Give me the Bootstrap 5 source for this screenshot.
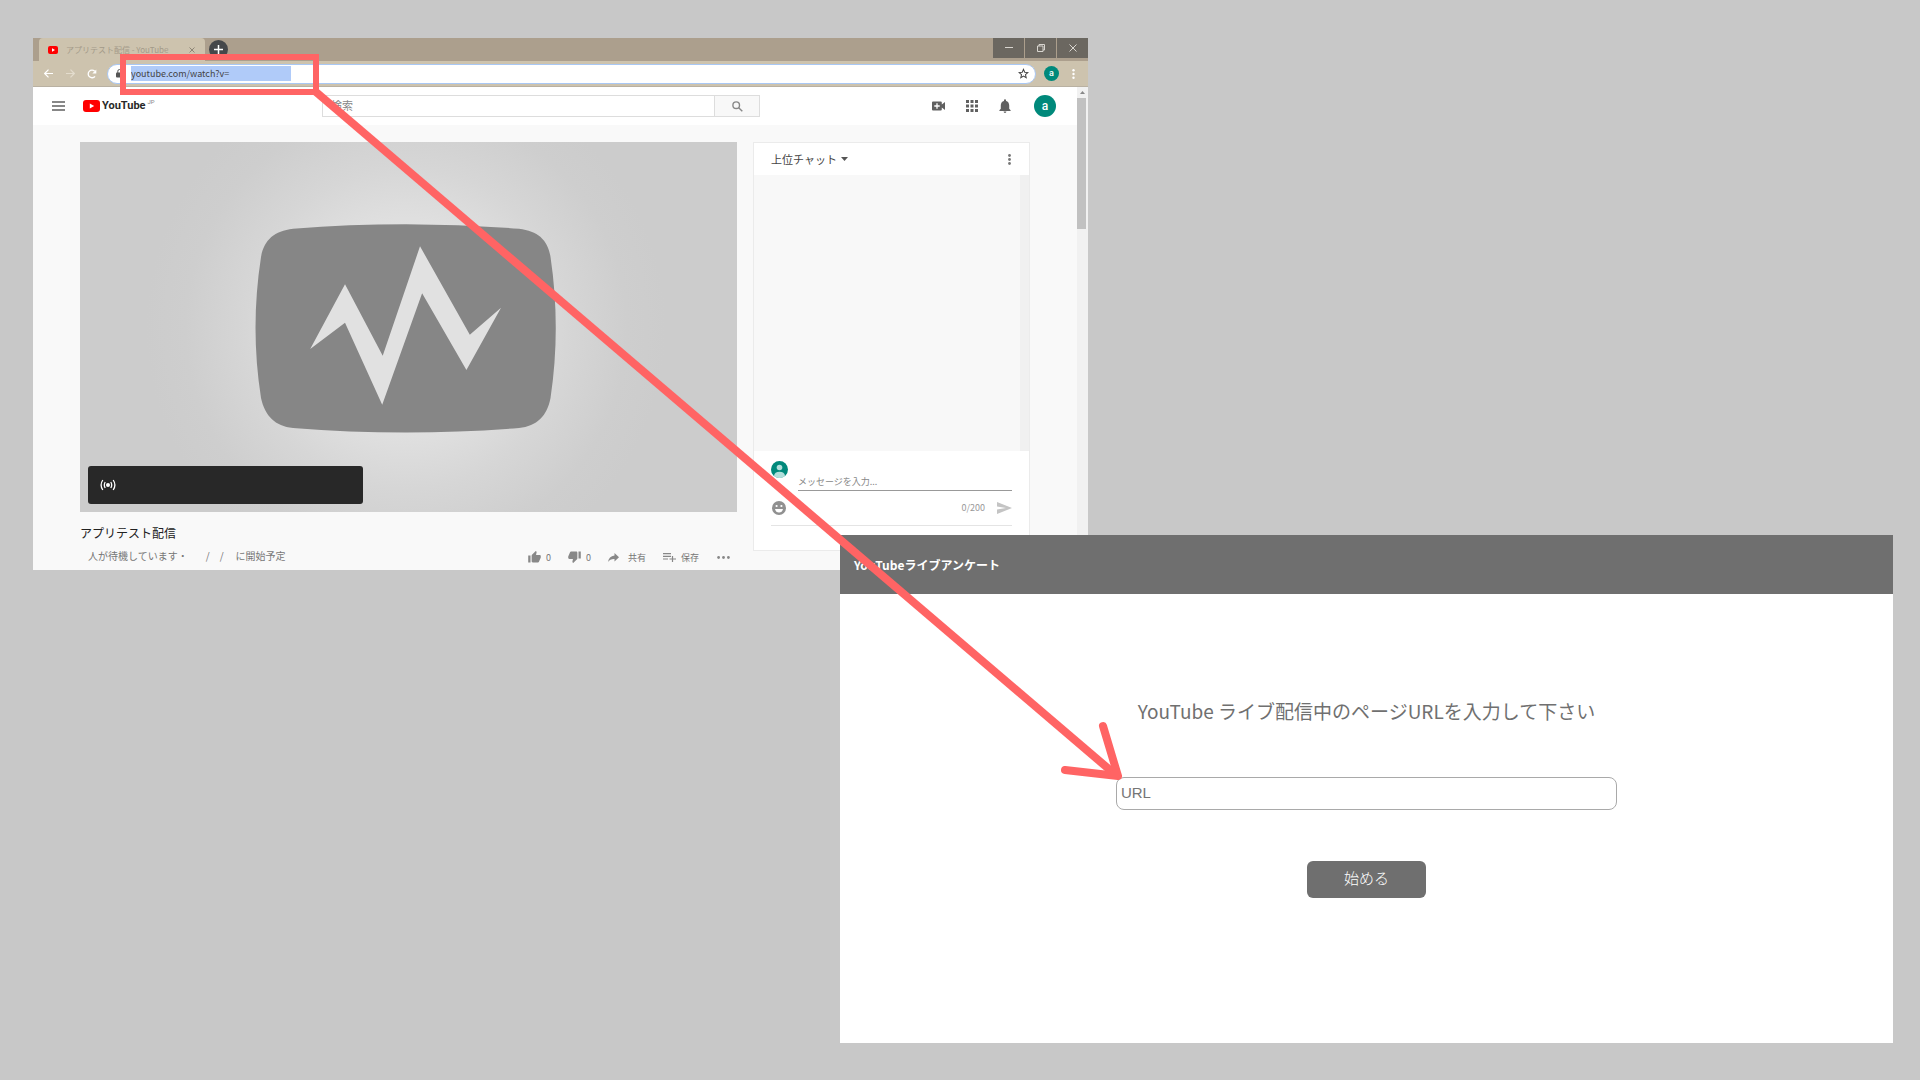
<!DOCTYPE html>
<html lang="ja">
<head>
<meta charset="utf-8">
<meta name="viewport" content="width=device-width, initial-scale=1">
<title>YouTubeライブアンケート</title>
<link href="https://cdn.jsdelivr.net/npm/bootstrap@5.3.0/dist/css/bootstrap.min.css" rel="stylesheet">
<style>
body{background:#c8c8c8;font-family:"Noto Sans CJK JP","Noto Sans",sans-serif;line-height:1.4}
.stage{aspect-ratio:16/9;overflow:hidden}
.win{position:absolute}
.win-browser{left:1.72%;top:3.52%;width:54.95%;background:#f9f9f9}
.win-survey{left:43.75%;top:49.54%;width:54.84%;height:47.04%;background:#fff}
.overlay{position:absolute;inset:0;width:100%;height:100%;pointer-events:none}
.ib{background:none;border:0;padding:0;display:inline-flex;align-items:center;justify-content:center;line-height:1;color:inherit}
svg{display:block;flex:none}
/* browser frame */
.tabbar{background:#ac9f8d;height:23px;padding-left:6px}
.tab-item{background:#cdc3ae;width:166px;height:23px;border-radius:4px 4px 0 0;padding:0 10px 0 9px;color:#a39a89;font-size:8px}
.tab-new{width:19px;height:19px;border-radius:50%;background:#45474a;color:#fff;margin:2px 0 0 4px}
.wc{background:#6b6760;width:31px;height:20px;color:#d8d5cf}
.toolbar{background:#cdc3ae;height:26px;border-bottom:1px solid #b9b1a2;color:#fff}
.toolbar .nav-ic{width:22px}
.omni{height:20px;background:#fff;border:1px solid #a9c8f5;border-radius:10px;padding:0 6px 0 8px;color:#555}
.omni input{width:160px;height:15px;border:0;padding:0;background:#b0cbf9;color:#444;font-size:9px;outline:0}
.ava{background:#00897b;color:#fff;border-radius:50%;font-family:Roboto,sans-serif;font-weight:500}
.ava-s{width:15px;height:15px;font-size:9px}
.ava-m{width:22px;height:22px;font-size:12px}
/* site header */
.top{background:#fff;height:38px;padding:0 21px 0 19px;color:#606060}
.brand{width:239px;padding-left:18px;box-sizing:content-box;width:239px;color:#282828;font:700 11px/14px Roboto,sans-serif;text-decoration:none}
.brand sup{font:400 6px/6px Roboto,sans-serif;color:#888;top:-4px;margin-left:2px}
.seek{width:438px;height:22px}
.seek input{border:1px solid #ddd;padding:0 8px;font-size:11px;color:#888;min-width:0}
.seek input::placeholder,.msg::placeholder{color:#888;opacity:1}
.seek button{width:45px;border:1px solid #ddd;border-left:0;background:#f8f8f8;color:#888}
.vscroll{width:11px;background:#f1f1f1}
.vscroll .cap-up{height:11px}
.vscroll .thumb{height:131px;width:9px;background:#c1c1c1}
.watch{padding:17px 47px 6px 47px;gap:16px}
.video{aspect-ratio:657/370}
.live{position:absolute;left:8px;bottom:8px;width:275px;height:38px;border-radius:3px;background:#282828;padding-left:12px}
.v-title{font-size:12px;font-weight:400;line-height:18px;margin:12px 0 0;color:#222}
.v-meta{font-size:10px;line-height:16px;color:#777;padding-left:8px;margin-top:6px}
.v-acts{font-size:9px;color:#777;padding-right:7px}
.v-acts .ib{gap:5px}
.chat{width:277px;border:1px solid #ebebeb;background:#fff;height:409px}
.chat-h{height:32px;padding:0 17px 0 17px;font-size:11px;color:#444}
.chat-b{height:276px;background:#f8f8f8}
.chat-b div{width:9px;background:#f0f0f0}
.chat-f{padding:10px 17px 0 17px}
.msg{border:0;border-bottom:1px solid #999;padding:0;font-size:9px;height:19px;width:214px;background:none;outline:0;margin-top:11px}
.chat-l{color:#999;font-size:9px;height:35px;padding-left:1px;border-bottom:1px solid #e4e4e4}
/* survey */
.s-head{background:#6f6f6f;height:59px;padding:1px 0 0 14px;color:#fff;font-size:12px;font-weight:700}
.s-lead{font-size:19px;line-height:26px;color:#707070;margin:104px 0 53px}
.s-url{width:501px;height:33px;border:1px solid #a9a9a9;border-radius:8px;padding:0 4px 2px;font:15px "Liberation Sans",sans-serif}
.s-url::placeholder{color:#757575;opacity:1}
.s-go{width:119px;height:37px;border:0;border-radius:6px;background:#6f6f6f;color:#fff;font-size:15px;font-weight:300;line-height:22px;padding:0 0 3px;margin-top:51px}
</style>
</head>
<body>
<main class="stage position-relative w-100">
<section class="win win-browser">
  <div class="tabbar d-flex">
    <div class="tab-item d-flex align-items-center">
      <svg width="10" height="8" viewBox="0 0 10 8"><rect width="10" height="8" rx="2" fill="#f00"/><path d="M4 2.200 7 4 4 5.800z" fill="#fff"/></svg>
      <span class="ps-1 ms-1 flex-grow-1 text-nowrap">アプリテスト配信 - YouTube</span>
      <button class="ib" aria-label="タブを閉じる"><svg width="6" height="6" viewBox="0 0 6 6" stroke="#8d8576"><path d="M.5.5l5 5M5.500.5l-5 5"/></svg></button>
    </div>
    <button class="ib tab-new" aria-label="新しいタブ"><svg width="9" height="9" viewBox="0 0 9 9" stroke="#fff" stroke-width="1.500"><path d="M4.500 0v9M0 4.500h9"/></svg></button>
    <div class="d-flex ms-auto" style="gap:1px">
      <button class="ib wc" aria-label="最小化"><svg width="8" height="8" viewBox="0 0 8 8" stroke="currentColor"><path d="M0 3.500h8"/></svg></button>
      <button class="ib wc" aria-label="元に戻す"><svg width="8" height="8" viewBox="0 0 8 8" stroke="currentColor" fill="none"><path d="M.5 2h5.500v5.500H.5zM2 2V.5h5.500V6H6"/></svg></button>
      <button class="ib wc" aria-label="閉じる"><svg width="8" height="8" viewBox="0 0 8 8" stroke="currentColor"><path d="M.5.5l7 7M7.500.5l-7 7"/></svg></button>
    </div>
  </div>
  <div class="toolbar d-flex align-items-center">
    <div class="d-flex ps-1">
      <button class="ib nav-ic" aria-label="戻る"><svg width="9" height="9" viewBox="0 0 9 9" fill="none" stroke="#fff" stroke-width="1.200"><path d="M9 4.500H1M4.500.7.7 4.500l3.800 3.800"/></svg></button>
      <button class="ib nav-ic" aria-label="進む"><svg width="9" height="9" viewBox="0 0 9 9" fill="none" stroke="#e3dccd" stroke-width="1.200"><path d="M0 4.500h8M4.500.7l3.800 3.800-3.800 3.800"/></svg></button>
      <button class="ib nav-ic" aria-label="再読み込み"><svg width="10" height="10" viewBox="0 0 10 10"><path d="M8 7.300A3.800 3.800 0 1 1 7.700 2.300" fill="none" stroke="#fff" stroke-width="1.300"/><path d="M9.300.5v4H5.300z" fill="#fff"/></svg></button>
    </div>
    <div class="omni d-flex align-items-center flex-grow-1 ms-1">
      <svg width="7" height="9" viewBox="0 0 7 9"><rect y="3.500" width="7" height="5" rx="1" fill="#555"/><path d="M1.800 4V2.200a1.700 1.700 0 0 1 3.400 0V4" fill="none" stroke="#555"/></svg>
      <input class="ms-2" type="text" value="youtube.com/watch?v=" aria-label="アドレス">
      <button class="ib ms-auto" aria-label="ブックマーク"><svg width="11" height="11" viewBox="0 0 24 24"><path d="M12 3l2.700 6.300 6.800.6-5.200 4.500 1.600 6.700L12 17.500l-5.900 3.600 1.600-6.700L2.500 9.900l6.800-.6z" fill="none" stroke="#444" stroke-width="2.200"/></svg></button>
    </div>
    <button class="ib ava ava-s ms-2" aria-label="プロフィール">a</button>
    <button class="ib ms-2 me-2 px-1" aria-label="メニュー"><svg width="5" height="10" viewBox="0 0 5 10" fill="#fff"><circle cx="2.500" cy="1.200" r="1.200"/><circle cx="2.500" cy="5" r="1.200"/><circle cx="2.500" cy="8.800" r="1.200"/></svg></button>
  </div>
  <div class="d-flex">
    <div class="flex-grow-1">
      <header class="top d-flex align-items-center">
        <button class="ib" aria-label="ガイド"><svg width="13" height="10" viewBox="0 0 13 10" stroke="#606060" stroke-width="1.300"><path d="M0 1h13M0 5h13M0 9h13"/></svg></button>
        <a class="brand d-flex align-items-center" href="#"><svg width="17" height="12" viewBox="0 0 17 12"><rect width="17" height="12" rx="3" fill="#f00"/><path d="M6.800 3.400 11.200 6 6.800 8.600z" fill="#fff"/></svg><span style="margin-left:2px">YouTube</span><sup>JP</sup></a>
        <form class="seek d-flex"><input class="flex-grow-1" type="search" placeholder="検索" aria-label="検索"><button class="ib" type="button" aria-label="検索する"><svg width="11" height="11" viewBox="0 0 11 11" fill="none" stroke="#888" stroke-width="1.400"><circle cx="4.200" cy="4.200" r="3.300"/><path d="M6.700 6.700l3.600 3.600"/></svg></button></form>
        <div class="d-flex align-items-center ms-auto">
          <button class="ib" aria-label="作成"><svg width="13" height="10" viewBox="0 0 13 10"><path d="M1 .5h7.800q1 0 1 1v2L13 1v8L9.800 6.500v2q0 1-1 1H1q-1 0-1-1v-7q0-1 1-1z" fill="#606060"/><path d="M5 2.300v5.400M2.300 5h5.400" stroke="#fff" stroke-width="1.300"/></svg></button>
          <button class="ib" style="margin-left:21px" aria-label="アプリ"><svg width="12" height="12" viewBox="0 0 12 12" fill="#606060"><path d="M0 0h3v3H0zM4.500 0h3v3h-3zM9 0h3v3H9zM0 4.500h3v3H0zM4.500 4.500h3v3h-3zM9 4.500h3v3H9zM0 9h3v3H0zM4.500 9h3v3h-3zM9 9h3v3H9z"/></svg></button>
          <button class="ib" style="margin-left:21px" aria-label="通知"><svg width="12" height="14" viewBox="0 0 16 20" fill="#606060"><path d="M8 20a2 2 0 0 0 2-2H6a2 2 0 0 0 2 2zM14 14V9c0-3.100-1.600-5.600-4.500-6.300V2a1.500 1.500 0 0 0-3 0v.7C3.600 3.400 2 5.900 2 9v5l-2 2v1h16v-1z"/></svg></button>
          <button class="ib ava ava-m" style="margin-left:23px" aria-label="アカウント">a</button>
        </div>
      </header>
      <div class="watch d-flex align-items-start">
        <article class="flex-grow-1">
          <div class="video position-relative">
            <svg class="w-100 h-100" viewBox="80 142 657 370">
              <defs><radialGradient id="glow" gradientUnits="userSpaceOnUse" cx="406" cy="328" r="260"><stop offset="0" stop-color="#eee"/><stop offset=".4" stop-color="#e0e0e0"/><stop offset=".62" stop-color="#d6d6d6"/><stop offset=".85" stop-color="#cecece"/><stop offset="1" stop-color="#ccc"/></radialGradient></defs>
              <path fill="url(#glow)" d="M80 142h657v370H80z"/>
              <path fill="#868686" d="M293 228.700Q406 220 519 228.700C538 231 548 240 550.500 257Q561 328 550.500 398C547 416 537 426 519 428Q406 437 293 428C275 426 265 416 261 398Q250 328 261 257C264 240 274 231 293 228.700z"/>
              <path fill="#e1e1e1" d="M310.200 349 345 284.300 382.700 355.700 420 246.300 469.800 334.700 501 307.700 466.400 370 422.100 293.300 382.200 404.700 345 322.700z"/>
            </svg>
            <div class="live d-flex align-items-center"><svg width="16" height="12" viewBox="0 0 16 12" fill="none" stroke="#fff" stroke-width="1.300"><circle cx="8" cy="6" r="2" fill="#fff" stroke="none"/><path d="M5.200 3q-1.800 3 0 6M10.800 3q1.800 3 0 6M2.800 1Q-.6 6 2.800 11M13.200 1q3.400 5 0 10"/></svg></div>
          </div>
          <h1 class="v-title">アプリテスト配信</h1>
          <div class="d-flex justify-content-between">
            <div class="v-meta d-flex text-nowrap"><span>人が待機しています・</span><span style="margin-left:18px">/</span><span style="margin-left:10px">/</span><span style="margin-left:12px">に開始予定</span></div>
            <div class="v-acts d-flex align-items-center pt-2 text-nowrap">
              <button class="ib"><svg width="13" height="12" viewBox="1 1 22 21" fill="#888"><path d="M1 21h4V9H1v12zm22-11c0-1.100-.9-2-2-2h-6.300l1-4.600v-.3c0-.4-.2-.8-.4-1.100L14.200 1 7.600 7.600C7.200 8 7 8.500 7 9v10c0 1.100.9 2 2 2h9c.8 0 1.500-.5 1.800-1.200l3-7.100c.1-.2.200-.5.200-.7z"/></svg>0</button>
              <button class="ib" style="margin-left:17px"><svg width="13" height="12" viewBox="1 2 22 21" fill="#888"><path d="M15 3H6c-.8 0-1.500.5-1.800 1.200l-3 7.100c-.1.200-.2.500-.2.700v2c0 1.100.9 2 2 2h6.300l-1 4.600v.3c0 .4.200.8.4 1.100L9.800 23l6.600-6.600c.4-.4.600-.9.600-1.400V5c0-1.100-.9-2-2-2zm4 0v12h4V3z"/></svg>0</button>
              <button class="ib" style="margin-left:17px;gap:9px"><svg width="11" height="9" viewBox="0 0 11 9" fill="#888"><path d="M6.500 0 11 4.200 6.500 8.500V6Q2 5.800 0 9 .8 3.300 6.500 2.500z"/></svg>共有</button>
              <button class="ib" style="margin-left:17px"><svg width="13" height="10" viewBox="0 0 13 10" fill="none" stroke="#888" stroke-width="1.200"><path d="M0 1.600h8M0 4.300h8M0 7h5M9.500 4v6M6.500 7H13"/></svg>保存</button>
              <button class="ib" style="margin-left:18px" aria-label="その他"><svg width="13" height="4" viewBox="0 0 13 4" fill="#888"><circle cx="1.600" cy="2.500" r="1.400"/><circle cx="6.500" cy="2.500" r="1.400"/><circle cx="11.400" cy="2.500" r="1.400"/></svg></button>
            </div>
          </div>
        </article>
        <aside class="chat flex-shrink-0">
          <div class="chat-h d-flex align-items-center justify-content-between">
            <button class="ib"><span>上位チャット</span><svg class="ms-1" width="7" height="4" viewBox="0 0 7 4"><path d="M0 0h7L3.500 4z" fill="#555"/></svg></button>
            <button class="ib" aria-label="チャットのメニュー"><svg width="5" height="11" viewBox="0 0 5 11" fill="#777"><circle cx="2.500" cy="1.500" r="1.400"/><circle cx="2.500" cy="5.500" r="1.400"/><circle cx="2.500" cy="9.500" r="1.400"/></svg></button>
          </div>
          <div class="chat-b d-flex justify-content-end"><div></div></div>
          <div class="chat-f">
            <div class="d-flex align-items-start justify-content-between">
              <svg width="17" height="17" viewBox="0 0 17 17"><circle cx="8.500" cy="8.500" r="8.500" fill="#00897b"/><circle cx="8.500" cy="6.500" r="2.800" fill="#b2dfdb"/><path d="M3 15Q3.500 10.800 8.500 10.800T14 15a8.500 8.500 0 0 1-11 0z" fill="#b2dfdb"/></svg>
              <input class="msg" type="text" placeholder="メッセージを入力..." aria-label="メッセージを入力">
            </div>
            <div class="chat-l d-flex align-items-center">
              <button class="ib" aria-label="絵文字"><svg width="14" height="14" viewBox="0 0 14 14"><circle cx="7" cy="7" r="7" fill="#909090"/><path d="M3 8h8q-.8 3.600-4 3.600T3 8z" fill="#fff"/><circle cx="4.600" cy="5" r="1.100" fill="#fff"/><circle cx="9.400" cy="5" r="1.100" fill="#fff"/></svg></button>
              <span class="ms-auto">0/200</span>
              <button class="ib" style="margin-left:12px" aria-label="送信"><svg width="15" height="12" viewBox="0 0 15 12"><path d="M0 0l15 6-15 6V7.500L9 6 0 4.500z" fill="#c4c4c4"/></svg></button>
            </div>
          </div>
        </aside>
      </div>
    </div>
    <div class="vscroll flex-shrink-0">
      <div class="cap-up d-flex align-items-center justify-content-center"><svg width="5" height="3" viewBox="0 0 5 3"><path d="M0 3h5L2.500 0z" fill="#888"/></svg></div>
      <div class="thumb"></div>
    </div>
  </div>
</section>

<section class="win win-survey">
  <header class="s-head d-flex align-items-center">YouTubeライブアンケート</header>
  <form class="d-flex flex-column align-items-center">
    <label class="s-lead" for="url">YouTube ライブ配信中のページURLを入力して下さい</label>
    <input class="s-url" id="url" type="text" placeholder="URL">
    <button class="s-go" type="button">始める</button>
  </form>
</section>

<svg class="overlay" viewBox="0 0 1920 1080" fill="none" stroke="#ff6464">
  <path d="M123 57h193v35H123z" stroke-width="6"/>
  <path d="M316 92 1117 776" stroke-width="8"/>
  <path d="M1103 726 1118 776 1065 770" stroke-width="8" stroke-linecap="round" stroke-linejoin="round"/>
</svg>
</main>
<script src="https://cdn.jsdelivr.net/npm/bootstrap@5.3.0/dist/js/bootstrap.bundle.min.js"></script>
</body>
</html>
